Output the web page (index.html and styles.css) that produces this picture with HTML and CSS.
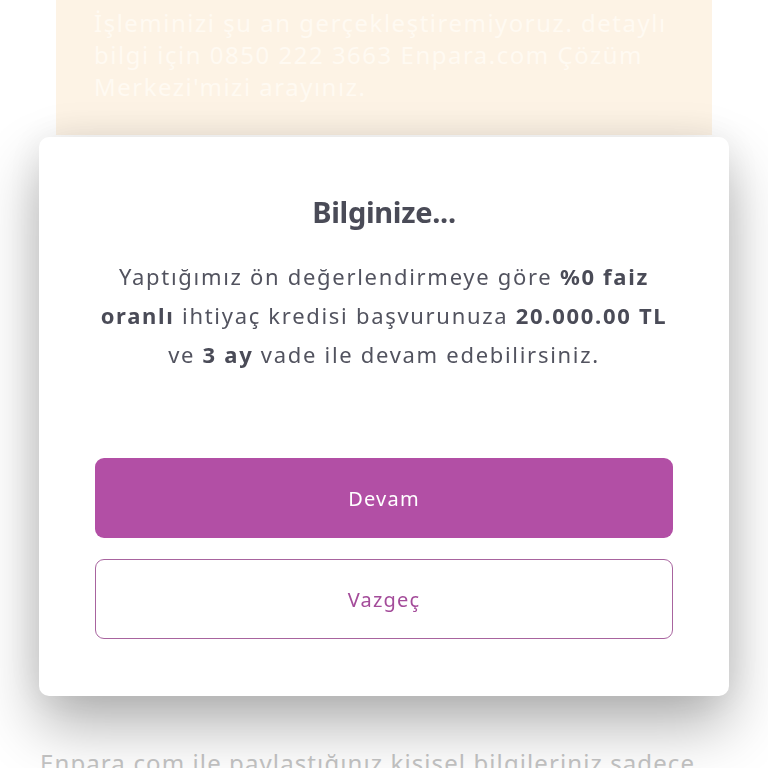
FILE: index.html
```html
<!DOCTYPE html>
<html lang="tr">
<head>
<meta charset="utf-8">
<title>Bilginize</title>
<link rel="stylesheet" href="styles.css">
</head>
<body>
<main class="page">
  <section class="notice">
    <p>İşleminizi şu an gerçekleştiremiyoruz. detaylı<br>bilgi için 0850 222 3663 Enpara.com Çözüm<br>Merkezi'mizi arayınız.</p>
  </section>
  <p class="privacy">Enpara.com ile paylaştığınız kişisel bilgileriniz sadece</p>
</main>
<div class="overlay">
  <div class="modal">
    <h2 class="modal-title">Bilginize...</h2>
    <p class="modal-text">Yaptığımız ön değerlendirmeye göre <b>%0 faiz</b><br><b>oranlı</b> ihtiyaç kredisi başvurunuza <b>20.000.00 TL</b><br>ve <b>3 ay</b> vade ile devam edebilirsiniz.</p>
    <div class="actions">
      <button class="btn btn-primary">Devam</button>
      <button class="btn btn-outline">Vazgeç</button>
    </div>
  </div>
</div>
</body>
</html>
```
FILE: styles.css
```css
html, body {
  margin: 0;
  padding: 0;
  background: #ffffff;
  height: 768px;
  overflow: hidden;
  font-family: "Noto Sans", "Open Sans", sans-serif;
}

.page {
  display: flex;
  flex-direction: column;
}

.notice {
  margin: 0 56px;
  height: 135px;
  background: #fdf3e5;
  padding: 0 38px;
  box-sizing: border-box;
}

.notice p {
  margin: 7px 0 0;
  color: #fffaf2;
  font-size: 24px;
  line-height: 32px;
  letter-spacing: 1.5px;
  white-space: nowrap;
}

.privacy {
  margin: 612px 0 0 40px;
  color: #c4c4c4;
  font-size: 24px;
  line-height: 32px;
  letter-spacing: 1.1px;
  white-space: nowrap;
}

.overlay {
  position: fixed;
  inset: 0;
  padding: 137px 39px 0;
}

.modal {
  background: #ffffff;
  border-radius: 10px;
  height: 559px;
  box-sizing: border-box;
  padding: 57px 40px 57px;
  box-shadow: 0 30px 60px rgba(0, 0, 0, 0.3), 0 0 44px rgba(0, 0, 0, 0.08);
  display: flex;
  flex-direction: column;
  align-items: stretch;
  text-align: center;
}

.modal-title {
  margin: 0;
  font-size: 29px;
  line-height: 36px;
  font-weight: 700;
  color: #4a4b57;
  letter-spacing: -0.3px;
}

.modal-text {
  margin: 27px 0 0;
  font-size: 22px;
  line-height: 39px;
  color: #52535f;
  letter-spacing: 1.7px;
  white-space: nowrap;
}

.modal-text b {
  font-weight: 700;
  color: #4a4b57;
}

.actions {
  margin: auto 16px 0;
  display: flex;
  flex-direction: column;
  gap: 21px;
}

.btn {
  height: 80px;
  border-radius: 9px;
  font-family: inherit;
  font-size: 20px;
  letter-spacing: 1.2px;
  cursor: pointer;
}

.btn-primary {
  background: #b24fa5;
  border: none;
  color: #ffffff;
}

.btn-outline {
  background: #ffffff;
  border: 1.5px solid #a8649f;
  color: #a44c9a;
}
```
